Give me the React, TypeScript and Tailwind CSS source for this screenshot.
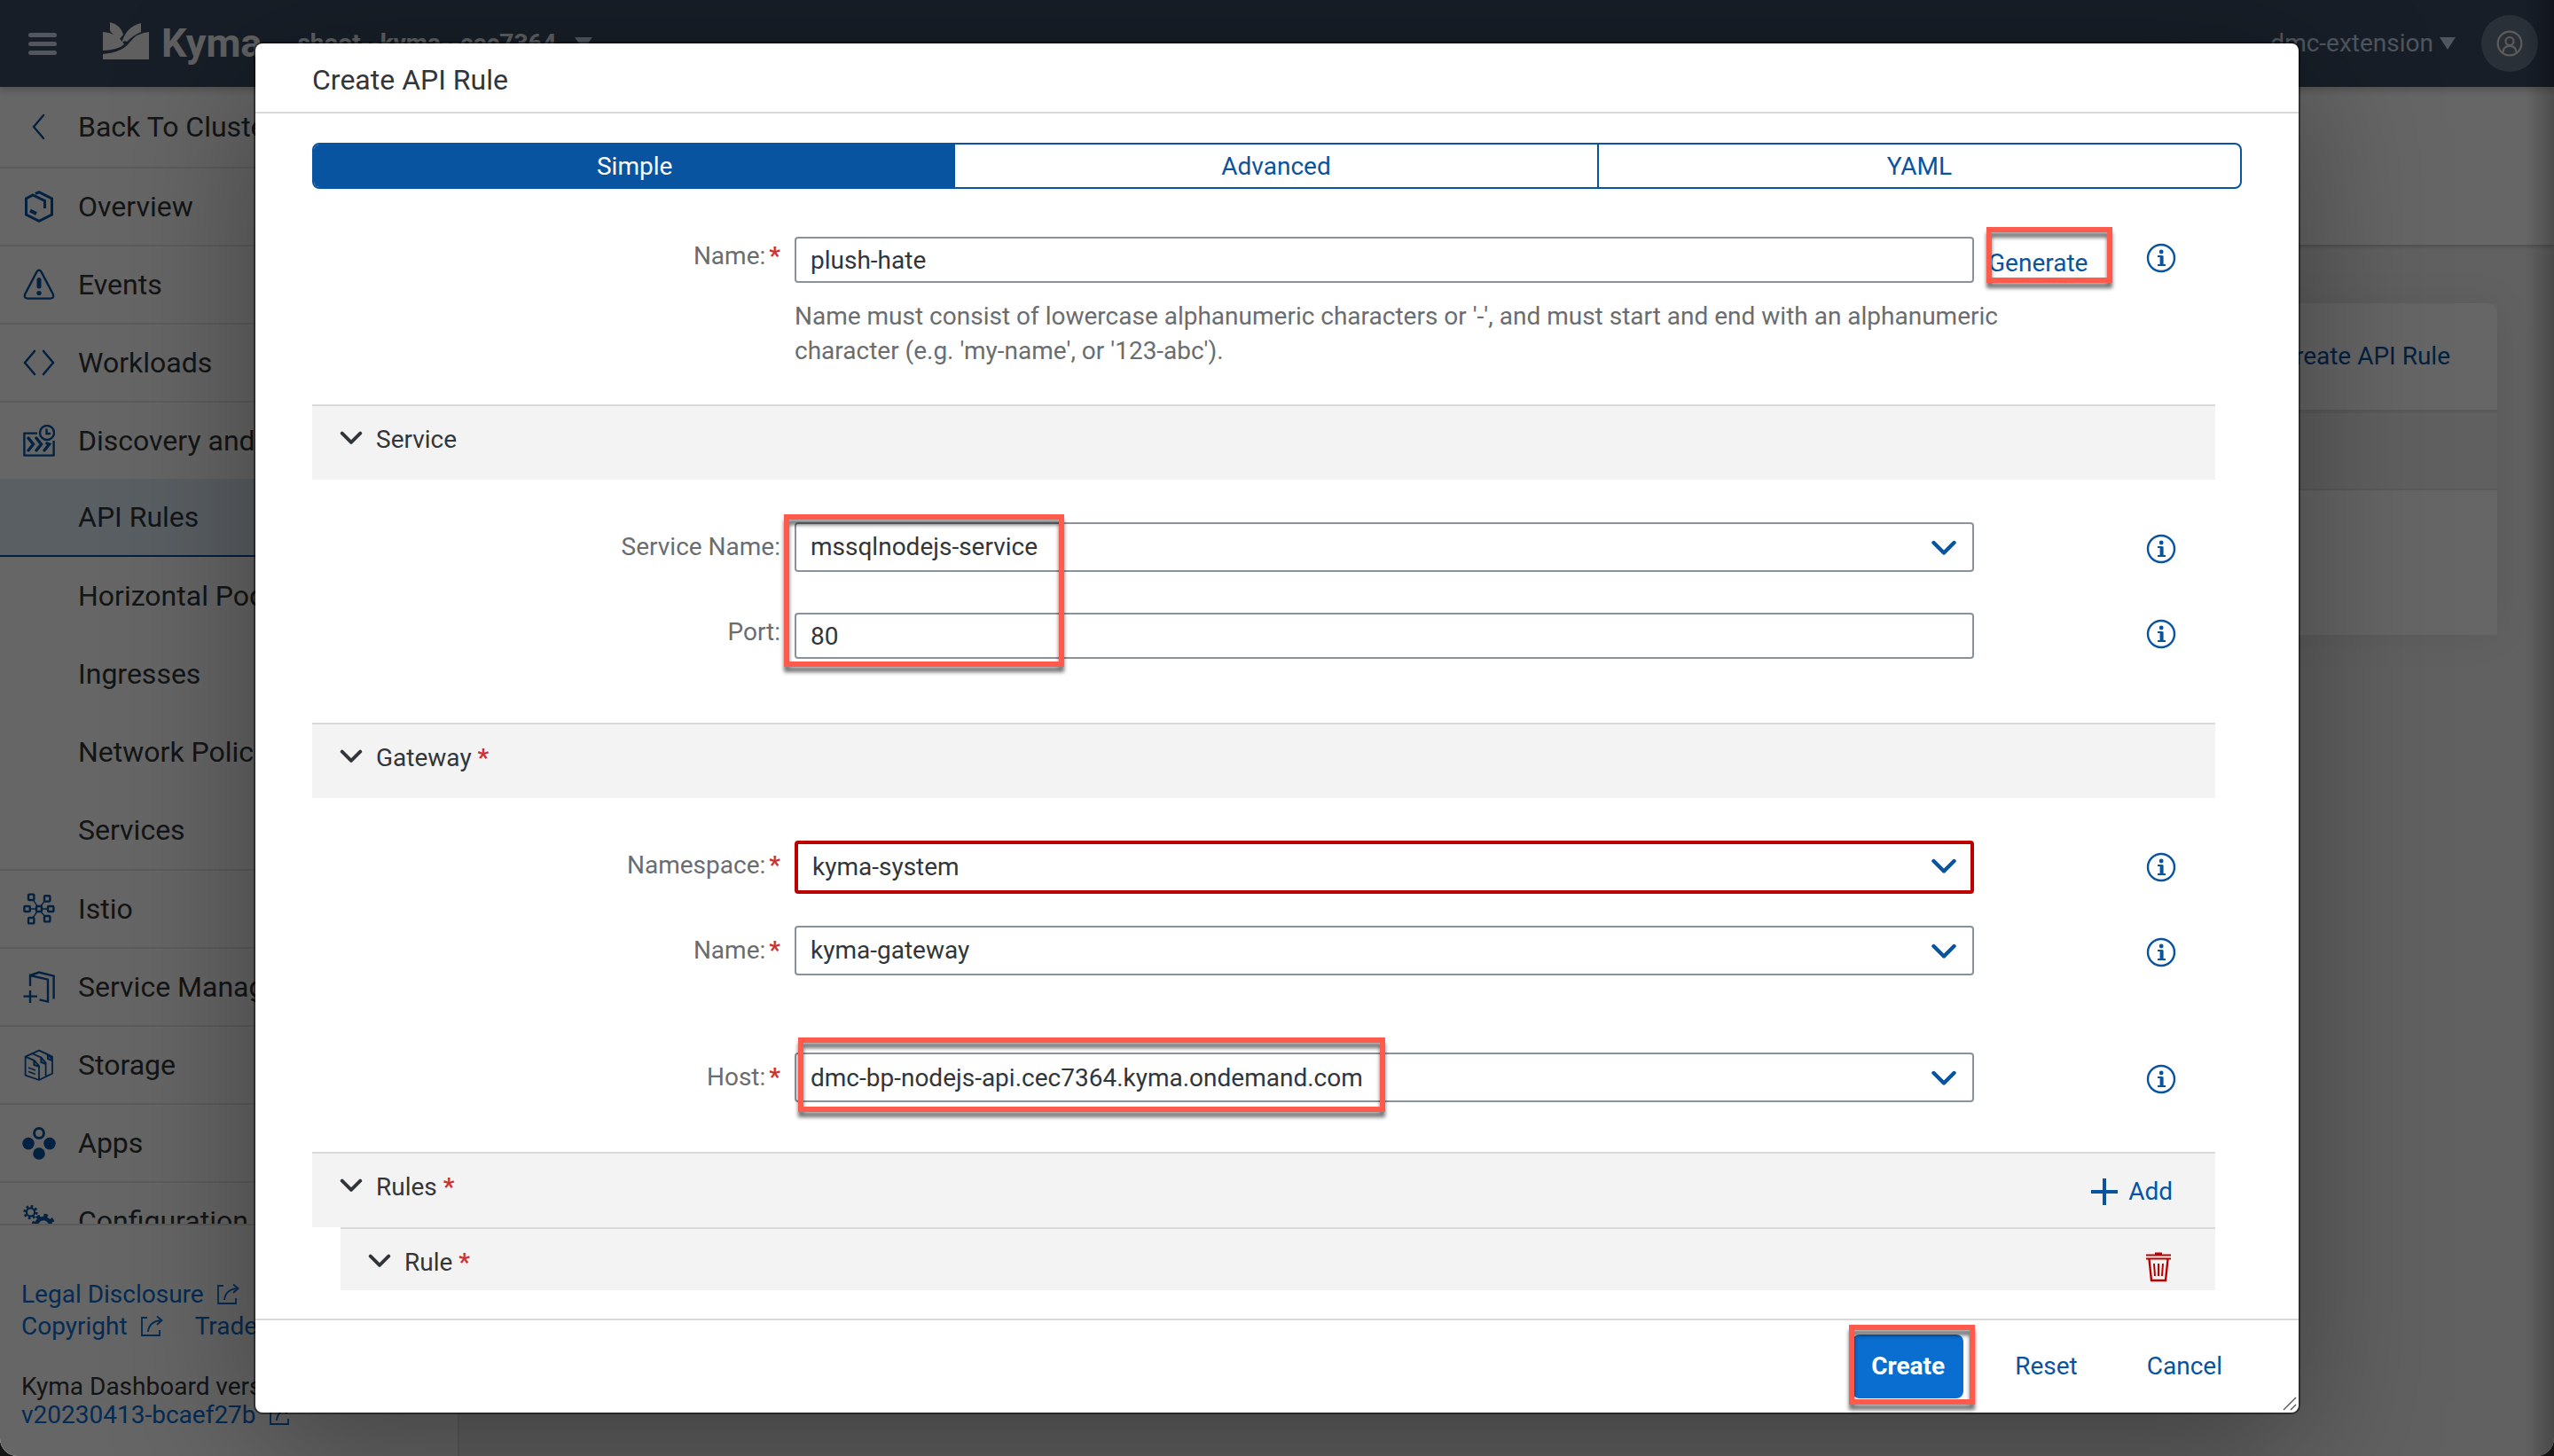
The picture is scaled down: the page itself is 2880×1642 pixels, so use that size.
import React from 'react'

const BLUE = 'text-[#0854a0]'

function Svg({ className, box = '0 0 36 36', children }: { className?: string; box?: string; children: React.ReactNode }) {
  return (
    <svg viewBox={box} className={className} fill="none" stroke="currentColor" strokeWidth={3} aria-hidden="true">
      {children}
    </svg>
  )
}

const icons = {
  back: (
    <path d="M23 5 L12 18 L23 31" strokeWidth={2.4} strokeLinecap="round" />
  ),
  overview: (
    <g strokeLinejoin="miter">
      <path d="M14 3.4 L18 1.6 L32.5 9 V27 L18 34.4 L3.5 27 V9 L11 5 L24.5 11.5 V20" />
      <path d="M8 22.5 L15 26" strokeWidth={4} />
    </g>
  ),
  events: (
    <g>
      <path d="M15.4 3.6 Q18 0 20.6 3.6 L33.8 28.6 Q35.4 33.6 30.5 33.6 H5.5 Q0.6 33.6 2.2 28.6 Z" strokeWidth={2.4} />
      <path d="M18 12.5 V20" strokeWidth={5} strokeLinecap="round" />
      <circle cx="18" cy="27.6" r="2.7" fill="currentColor" stroke="none" />
    </g>
  ),
  workloads: (
    <path d="M13 5 L2 18 L13 31 M23 5 L34 18 L23 31" strokeWidth={2.6} strokeLinecap="round" strokeLinejoin="round" />
  ),
  discovery: (
    <g strokeWidth={2.4}>
      <path d="M16 9.6 H1.4 V34.6 H34.6 V18" strokeLinejoin="round" />
      <circle cx="27" cy="9" r="8" />
      <path d="M26.5 4.5 V10 H31" />
      <path d="M6 15 L11.5 22 L6 29 M15 15 L20.5 22 L15 29 M24 29 L29.5 22 L27 21" strokeWidth={3.4} strokeLinecap="round" />
    </g>
  ),
  istio: (
    <g strokeWidth={2.4}>
      <path d="M11 7 L16 15 M25 8 L20 15 M8 18 H14 M22 18 H28 M16 21 L11 28 M20 21 L25 27" strokeWidth={1.4} />
      <rect x="6" y="1.6" width="6.4" height="6.4" rx="1" />
      <rect x="24" y="3.2" width="6.4" height="6.4" rx="1" />
      <rect x="1.4" y="15" width="6.4" height="6" rx="1" />
      <rect x="15" y="15" width="6" height="6" rx="1" />
      <rect x="28" y="15" width="6.4" height="6" rx="1" />
      <rect x="6" y="28" width="6.4" height="6.4" rx="1" />
      <rect x="24" y="26" width="6.4" height="6.4" rx="1" />
    </g>
  ),
  service: (
    <g strokeWidth={2.4}>
      <path d="M8 17 V5 L28 9.6 V34.6 L18.5 32.4" />
      <path d="M8 5 L18 1.6 L34.6 5.6 V31.6 M8 22 V36 M0.5 28.6 H16" />
    </g>
  ),
  storage: (
    <g strokeWidth={1.8} strokeLinejoin="round">
      <path d="M2.6 8.6 L18 1.6 L33 8.6 V27.6 L18 35 L2.6 29.6 Z M18 35 V19 L12.5 12.8 L2.6 8.6 M10.5 5.2 L20.5 9.6 L25.6 15.6 V31 M18.5 1.8 L28 6 L33 12" />
      <path d="M12.5 12.8 V18 L18 19.6 M20.5 9.6 V15 L25.6 16.6 M28 6 V11 L33 13" strokeWidth={2.2} />
      <path d="M6 21 L14 24 M6 25.4 L14 28.4" strokeWidth={1.6} />
    </g>
  ),
  apps: (
    <g fill="currentColor" stroke="none">
      <circle cx="18" cy="7" r="5.4" fill="none" stroke="currentColor" strokeWidth={3} />
      <circle cx="6" cy="18.6" r="6.8" />
      <circle cx="30" cy="18.6" r="6.8" />
      <circle cx="18" cy="30" r="6.8" />
    </g>
  ),
  configuration: (
    <g>
      <circle cx="8.5" cy="8" r="4.6" strokeWidth={2.2} />
      <circle cx="8.5" cy="8" r="6.6" strokeWidth={3} strokeDasharray="2.6 2.58" />
      <circle cx="23" cy="23" r="8" strokeWidth={4.4} />
      <circle cx="23" cy="23" r="11.2" strokeWidth={4} strokeDasharray="4.4 4.4" />
    </g>
  ),
}

type IconName = keyof typeof icons

function NavItem({ icon, label }: { icon?: IconName; label: string }) {
  return (
    <a href="#" className="flex h-[88px] shrink-0 items-center border-b-2 border-[#e5e5e5] pl-[26px] text-[#32363a]">
      {icon && <Svg className={`size-9 overflow-visible ${BLUE}`}>{icons[icon]}</Svg>}
      <span className="pl-[26px] whitespace-nowrap">{label}</span>
    </a>
  )
}

function SubItem({ label, active }: { label: string; active?: boolean }) {
  return (
    <a
      href="#"
      className={`flex h-[88px] shrink-0 items-center pl-[88px] whitespace-nowrap text-[#32363a] ${
        active ? 'border-b-2 border-[#0854a0] bg-[#e1edf7]' : ''
      }`}
    >
      {label}
    </a>
  )
}

function ShareIcon() {
  return (
    <Svg box="0 0 26 26" className="size-[26px] shrink-0">
      <path d="M8 3 H2 V23 H22 V17 M9 19 Q10 7 24 6 M19 1.5 L24.5 6 L19 11" strokeWidth={1.8} />
    </Svg>
  )
}

function FooterLink({ label }: { label: string }) {
  return (
    <a href="#" className="flex items-center gap-3.5 whitespace-nowrap text-[#0a6ed1]">
      {label}
      <ShareIcon />
    </a>
  )
}

function Sidebar() {
  return (
    <aside className="flex w-[18%] shrink-0 flex-col border-r-2 border-[#e0e0e0] bg-white text-[32px]">
      <nav className="flex min-h-0 flex-1 flex-col overflow-hidden">
        <a href="#" className="flex h-[92px] shrink-0 items-center border-b-2 border-[#e5e5e5] pl-[26px] text-[#32363a]">
          <Svg className={`size-9 ${BLUE}`}>{icons.back}</Svg>
          <span className="pl-[26px] whitespace-nowrap">Back To Cluster Overview</span>
        </a>
        <NavItem icon="overview" label="Overview" />
        <NavItem icon="events" label="Events" />
        <NavItem icon="workloads" label="Workloads" />
        <a href="#" className="flex h-[86px] shrink-0 items-center pl-[26px] text-[#32363a]">
          <Svg className={`size-9 ${BLUE}`}>{icons.discovery}</Svg>
          <span className="pl-[26px] whitespace-nowrap">Discovery and Network</span>
        </a>
        <SubItem label="API Rules" active />
        <SubItem label="Horizontal Pod Autoscalers" />
        <SubItem label="Ingresses" />
        <SubItem label="Network Policies" />
        <div className="flex shrink-0 flex-col border-b-2 border-[#e5e5e5]">
          <SubItem label="Services" />
        </div>
        <NavItem icon="istio" label="Istio" />
        <NavItem icon="service" label="Service Management" />
        <NavItem icon="storage" label="Storage" />
        <NavItem icon="apps" label="Apps" />
        <NavItem icon="configuration" label="Configuration" />
      </nav>
      <footer className="h-[262px] shrink-0 border-t-2 border-[#e0e0e0] pt-[60px] pl-6 text-[28px]">
        <div className="flex h-9 items-center">
          <FooterLink label="Legal Disclosure" />
        </div>
        <div className="flex h-9 items-center gap-9">
          <FooterLink label="Copyright" />
          <FooterLink label="Trademark" />
        </div>
        <div className="mt-[34px] flex h-8 items-center whitespace-nowrap text-[#32363a]">Kyma Dashboard version:</div>
        <div className="flex h-8 items-center">
          <FooterLink label="v20230413-bcaef27b" />
        </div>
      </footer>
    </aside>
  )
}

function ShellBar() {
  return (
    <header className="z-10 flex h-[98px] shrink-0 items-center bg-[#3a4b62] pl-8 shadow-[0_4px_8px_rgba(0,0,0,0.2)]">
      <button type="button" aria-label="Menu" className="flex flex-col gap-[5px]">
        <span className="h-[5px] w-8 rounded-full bg-[#d1d8ea]" />
        <span className="h-[5px] w-8 rounded-full bg-[#d1d8ea]" />
        <span className="h-[5px] w-8 rounded-full bg-[#d1d8ea]" />
      </button>
      <a href="#" className="ml-[52px] flex items-center gap-3.5 text-[#f0f0f0]">
        <svg viewBox="0 0 52 42" className="mb-1.5 h-[42px] w-[52px]" fill="#f0f0f0" aria-hidden="true">
          <path d="M8 0 Q20 3 23 14 L18 20 Q12 14 8 10 Z" />
          <path d="M43 1 V11 Q34 15 27 22 Q23 20 21 24 Q26 5 43 1 Z" />
          <path d="M0 11 Q16 12 24 25 Q18 31 0 32 Z" />
          <path d="M52 11 V42 H0 V36 Q22 34 30 23 Q38 12 52 11 Z" />
        </svg>
        <span className="text-[45px] leading-[60px] font-bold">Kyma</span>
      </a>
      <button type="button" className="ml-10 flex items-center gap-5 text-[28px] font-bold text-[#e8ecf4]">
        shoot--kyma--cec7364
        <svg viewBox="0 0 20 14" className="h-[14px] w-5" fill="#c6d4ea" aria-hidden="true">
          <path d="M0 0 H20 L10 14 Z" />
        </svg>
      </button>
      <div className="ml-auto flex items-center pr-[18px]">
        <button type="button" className="flex items-center gap-1.5 text-[28px] text-[#c6d4ea]">
          dmc-extension
          <svg viewBox="0 0 20 14" className="h-[14px] w-5" fill="#c6d4ea" aria-hidden="true">
            <path d="M1 0 H19 L10 14 Z" />
          </svg>
        </button>
        <button type="button" aria-label="Profile" className="ml-7 grid size-16 place-items-center rounded-full bg-[#68788a]">
          <Svg className="size-[30px] text-[#e8e4de]">
            <circle cx="18" cy="18" r="16" strokeWidth={2.6} />
            <circle cx="18" cy="15" r="5.4" strokeWidth={2.6} />
            <path d="M9 30 Q9.500 21.500 18 21.500 Q26.500 21.500 27 30" strokeWidth={2.6} />
          </Svg>
        </button>
      </div>
    </header>
  )
}

function InfoButton({ label, tall }: { label: string; tall?: boolean }) {
  return (
    <span className={`ml-auto flex items-center pr-11 ${tall ? 'h-[60px]' : 'h-12'}`}>
      <button type="button" aria-label={`About ${label}`} className={BLUE}>
        <Svg className="block size-[34px]" box="0 0 34 34">
          <circle cx="17" cy="17" r="15" strokeWidth={2.4} />
          <circle cx="17.200" cy="10" r="2.400" fill="currentColor" stroke="none" />
          <path d="M17.600 14.500 V25" strokeWidth={4} />
          <path d="M13 15 H18.500 M13 25 H22" strokeWidth={2} />
        </Svg>
      </button>
    </span>
  )
}

function Star() {
  return <span className="font-bold text-[#cc3333]">*</span>
}

function Highlight({ className }: { className: string }) {
  return (
    <span
      aria-hidden="true"
      className={`pointer-events-none absolute border-[6px] border-[#ff5a4c] drop-shadow-[0_6px_2px_rgba(0,0,0,0.55)] ${className}`}
    />
  )
}

function Chevron({ className }: { className: string }) {
  return (
    <Svg box="0 0 28 18" className={className}>
      <path d="M2.500 3 L14 14.500 L25.500 3" strokeWidth={4.4} strokeLinecap="round" strokeLinejoin="round" />
    </Svg>
  )
}

function Row({
  id,
  label,
  required,
  tall,
  extra,
  children,
}: {
  id: string
  label: string
  required?: boolean
  tall?: boolean
  extra?: React.ReactNode
  children: React.ReactNode
}) {
  return (
    <div className="grid grid-cols-[528px_minmax(0,1fr)_256px] items-start gap-x-4">
      <label htmlFor={id} className={`text-right text-[#6a6d70] ${tall ? 'leading-[56px]' : 'leading-[44px]'}`}>
        {label}:{required && <span className="pl-1"><Star /></span>}
      </label>
      {children}
      <div className="flex h-0 items-start">
        {extra}
        <InfoButton label={label} tall={tall} />
      </div>
    </div>
  )
}

const FIELD = 'block w-full rounded border-[#89919a] bg-white px-4 text-[#32363a] outline-none'

function SelectField({ id, value, invalid, highlight }: { id: string; value: string; invalid?: boolean; highlight?: React.ReactNode }) {
  return (
    <div className="relative">
      <select
        id={id}
        defaultValue={value}
        className={`appearance-none ${FIELD} ${invalid ? 'h-[60px] border-4 border-[#bb0000]' : 'h-14 border-2'}`}
      >
        <option>{value}</option>
      </select>
      <Chevron className={`pointer-events-none absolute top-5 right-5 h-[18px] w-7 ${BLUE}`} />
      {highlight}
    </div>
  )
}

function PanelHeader({ title, required, action }: { title: string; required?: boolean; action?: React.ReactNode }) {
  return (
    <div className="flex h-[85px] items-start justify-between border-t-2 border-[#d9d9d9] bg-[#f3f3f3] pt-[18px] pl-[31px]">
      <button type="button" className="flex items-center gap-[15px] leading-10 text-[#32363a]">
        <Chevron className="mb-1 h-4 w-[26px]" />
        <span>
          {title} {required && <Star />}
        </span>
      </button>
      {action}
    </div>
  )
}

function Dialog() {
  return (
    <section
      role="dialog"
      aria-label="Create API Rule"
      className="relative flex h-[94%] w-[80%] flex-col rounded-lg bg-white text-[28px] shadow-[0_0_0_2px_rgba(0,0,0,0.45),0_40px_160px_rgba(0,0,0,0.36)]"
    >
      <h1 className="flex h-[79px] shrink-0 items-center border-b-2 border-[#d9d9d9] px-16 pt-1 text-[32px] text-[#32363a]">Create API Rule</h1>

      <div className="flex min-h-0 flex-1 flex-col px-16 pt-[33px] pb-8">
        <div role="tablist" className={`flex h-[52px] shrink-0 overflow-hidden rounded-lg border-2 border-[#0854a0] leading-[50px] ${BLUE}`}>
          <button type="button" role="tab" aria-selected="true" className="flex-1 bg-[#0854a0] text-white">Simple</button>
          <button type="button" role="tab" aria-selected="false" className="flex-1">Advanced</button>
          <button type="button" role="tab" aria-selected="false" className="flex-1 border-l-2 border-[#0854a0]">YAML</button>
        </div>

        <form className="-mt-px mr-[30px] min-h-0 flex-1 overflow-hidden pt-[55px]">
          <Row
            id="rule-name"
            label="Name"
            required
            extra={
              <span className="relative">
                <button type="button" className={`pt-1 leading-[52px] ${BLUE}`}>Generate</button>
                <Highlight className="-top-[11px] -left-0.5 h-[63px] w-[142px]" />
              </span>
            }
          >
            <input id="rule-name" defaultValue="plush-hate" className={`h-[52px] border-2 ${FIELD}`} />
          </Row>
          <p className="mt-[18px] ml-[544px] max-w-[1400px] leading-[39px] text-[#6a6d70]">
            Name must consist of lowercase alphanumeric characters or '-', and must start and end with an alphanumeric character (e.g.
            'my-name', or '123-abc').
          </p>

          <div className="mt-[41px]">
            <PanelHeader title="Service" />
            <div className="flex flex-col gap-[46px] pt-12 pb-[72px]">
              <Row id="service-name" label="Service Name" tall>
                <SelectField
                  id="service-name"
                  value="mssqlnodejs-service"
                  highlight={<Highlight className="-top-[9px] -left-3 z-10 h-[172px] w-[316px]" />}
                />
              </Row>
              <Row id="service-port" label="Port">
                <input id="service-port" defaultValue="80" className={`h-[52px] border-2 ${FIELD}`} />
              </Row>
            </div>
          </div>

          <PanelHeader title="Gateway" required />
          <div className="pt-12 pb-14">
            <Row id="gateway-namespace" label="Namespace" required tall>
              <SelectField id="gateway-namespace" value="kyma-system" invalid />
            </Row>
            <div className="pt-9">
              <Row id="gateway-name" label="Name" required tall>
                <SelectField id="gateway-name" value="kyma-gateway" />
              </Row>
            </div>
            <div className="pt-[87px]">
              <Row id="host" label="Host" required tall>
                <div className="relative">
                  <input id="host" defaultValue="dmc-bp-nodejs-api.cec7364.kyma.ondemand.com" className={`h-14 border-2 ${FIELD}`} />
                  <button type="button" aria-label="Show hosts" className={`absolute top-5 right-5 ${BLUE}`}>
                    <Chevron className="block h-[18px] w-7" />
                  </button>
                  <Highlight className="-top-[17px] left-1 h-[84px] w-[662px]" />
                </div>
              </Row>
            </div>
          </div>

          <PanelHeader
            title="Rules"
            required
            action={
              <button type="button" className={`mt-[5px] mr-12 flex items-center gap-3 leading-10 ${BLUE}`}>
                <Svg className="size-[30px]" box="0 0 30 30">
                  <path d="M15 0 V30 M0 15 H30" strokeWidth={4} />
                </Svg>
                Add
              </button>
            }
          />
          <div className="ml-8">
            <PanelHeader
              title="Rule"
              required
              action={
                <button type="button" aria-label="Delete rule" className="mt-2 mr-[50px] text-[#bb0000]">
                  <Svg className="block h-[34px] w-7" box="0 0 28 34">
                    <path d="M0 3.500 H28 M10 1.500 H18 M0 7.500 H28" strokeWidth={2} />
                    <path d="M3.500 8 L6 32 H22 L24.500 8" strokeWidth={2.4} />
                    <path d="M9 13 L10 27 M14 13 V27 M19 13 L18 27" strokeWidth={2} />
                  </Svg>
                </button>
              }
            />
          </div>
        </form>
      </div>

      <div className={`flex h-[106px] shrink-0 items-center justify-end gap-[38px] border-t-2 border-[#d9d9d9] pr-[66px] ${BLUE}`}>
        <span className="relative">
          <button type="button" className="h-[72px] rounded-lg bg-[#0a6ed1] px-[21px] font-bold text-white">Create</button>
          <Highlight className="-top-[11px] -left-1 h-[90px] w-[142px]" />
        </span>
        <button type="button" className="px-5">Reset</button>
        <button type="button" className="px-5">Cancel</button>
      </div>
      <Svg box="0 0 16 16" className="absolute right-0.5 bottom-0.5 size-4 text-[#555555]">
        <path d="M1 15 L15 1 M9 15 L15 9" strokeWidth={1.4} />
      </Svg>
    </section>
  )
}

export default function App() {
  return (
    <div className="h-screen bg-[#151515] font-['Roboto','Liberation_Sans',sans-serif]">
      <div className="relative flex h-full flex-col overflow-hidden rounded-b-[20px] bg-[#f2f2f2]">
        <ShellBar />
        <div className="flex min-h-0 flex-1">
          <Sidebar />
          <main className="min-w-0 flex-1">
            <div className="h-[178px] bg-white shadow-[0_2px_4px_rgba(0,0,0,0.2)]" />
            <div className="mx-16 mt-[66px] shadow-[0_0_40px_rgba(0,0,0,0.08)]">
              <div className="flex h-[120px] items-center justify-end rounded-t-xl bg-white pr-[53px]">
                <button type="button" className={`text-[28px] ${BLUE}`}>Create API Rule</button>
              </div>
              <div className="h-[91px] border-t-4 border-b-2 border-[#e0e0e0] bg-[#f0f0f0]" />
              <div className="h-[163px] bg-white" />
            </div>
          </main>
        </div>
        <div className="absolute inset-y-0 right-0 z-20 w-8 bg-linear-to-r from-transparent to-black/25" />
        <div className="absolute inset-0 z-30 grid place-items-center bg-black/60">
          <Dialog />
        </div>
      </div>
    </div>
  )
}
